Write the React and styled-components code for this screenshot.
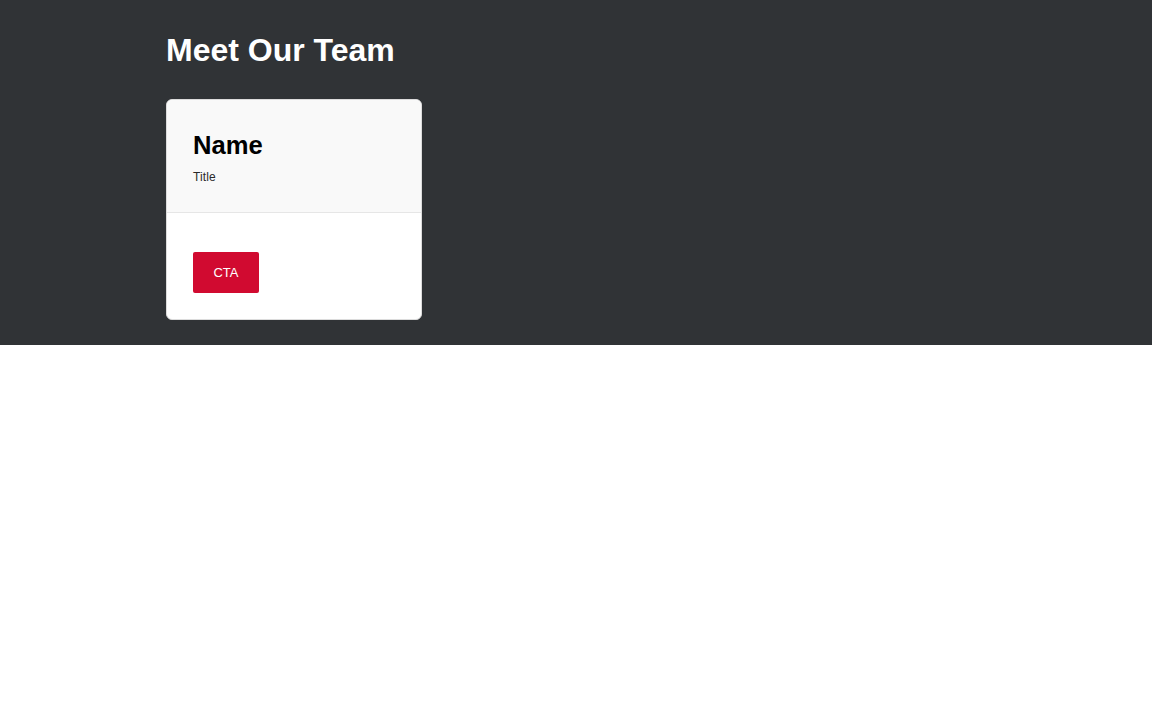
import React from "react";
import styled, { createGlobalStyle } from "styled-components";

const GlobalStyle = createGlobalStyle`
  html, body {
    margin: 0;
    padding: 0;
    background: #ffffff;
    font-family: "Liberation Sans", Arial, sans-serif;
  }
`;

const Section = styled.section`
  background: #303336;
  padding: 32px 0 25px;
`;

const Container = styled.div`
  width: 820px;
  margin: 0 auto 0 166px;
`;

const Heading = styled.h1`
  margin: 0 0 30px;
  font-size: 32px;
  font-weight: 700;
  color: #ffffff;
`;

const Grid = styled.div`
  display: grid;
  grid-template-columns: repeat(3, 256px);
  gap: 24px;
`;

const Card = styled.div`
  background: #ffffff;
  border: 1px solid #dcdcdc;
  border-radius: 6px;
  overflow: hidden;
`;

const CardHead = styled.div`
  background: #f9f9f9;
  padding: 31px 26px 28px;
  border-bottom: 1px solid #e6e6e6;
  h2 {
    margin: 0 0 10px;
    font-size: 25.6px;
    font-weight: 700;
    color: #000000;
  }
  p {
    margin: 0;
    font-size: 12px;
    letter-spacing: 0.1px;
    color: #2a2a2a;
  }
`;

const CardBody = styled.div`
  padding: 39px 26px 26px;
`;

const Button = styled.a`
  display: inline-flex;
  align-items: center;
  justify-content: center;
  width: 66px;
  height: 41px;
  background: #d10a30;
  color: #ffffff;
  font-size: 13px;
  border-radius: 2px;
  text-decoration: none;
`;

const team = [{ name: "Name", title: "Title" }];

const App = () => {
  return (
    <>
      <GlobalStyle />
      <Section>
        <Container>
          <Heading>Meet Our Team</Heading>
          <Grid>
            {team.map((m, i) => (
              <Card key={i}>
                <CardHead>
                  <h2>{m.name}</h2>
                  <p>{m.title}</p>
                </CardHead>
                <CardBody>
                  <Button href="#">CTA</Button>
                </CardBody>
              </Card>
            ))}
          </Grid>
        </Container>
      </Section>
    </>
  );
};

export default App;
